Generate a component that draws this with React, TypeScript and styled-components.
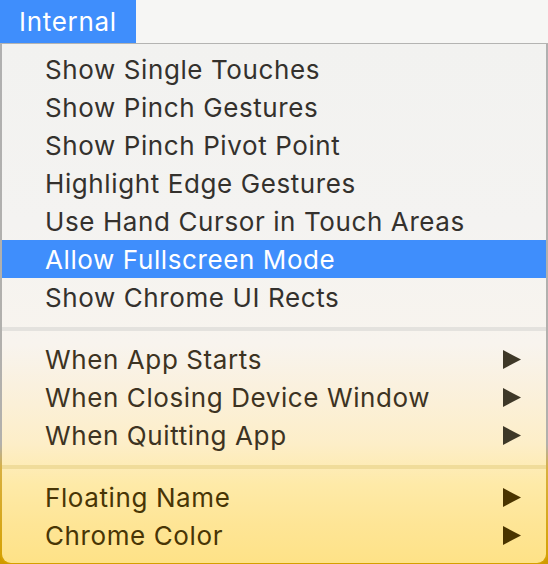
import React from "react";
import styled, { createGlobalStyle } from "styled-components";

const Global = createGlobalStyle`
  html, body { margin: 0; padding: 0; }
  body {
    width: 548px;
    height: 564px;
    overflow: hidden;
    background: linear-gradient(180deg, #f5f5f3 0px, #f5f5f3 450px, #d9a406 460px, #cf9a00 100%);
    font-family: Inter, "Liberation Sans", Arial, sans-serif;
  }
`;

const MenuBar = styled.div`
  height: 43px;
  background: #f6f6f4;
  border-bottom: 1px solid #b4b4b2;
  display: flex;
  align-items: stretch;
`;

const MenuTitle = styled.div`
  background: #3f8efc;
  color: #ffffff;
  font-size: 26px;
  letter-spacing: 0.7px;
  padding: 0 19px 0 19px;
  display: flex;
  align-items: center;
`;

const Frame = styled.div`
  padding: 0 2px 1px;
  border-radius: 0 0 10px 10px;
  background: linear-gradient(180deg, #b0b0b0 0px, #b2b0ac 400px, #d8b040 425px, #d5a000 100%);
`;

const Panel = styled.div`
  height: 510px;
  padding: 6px 0 3px;
  border-radius: 0 0 9px 9px;
  background: linear-gradient(
    180deg,
    #f2f2f0 0px,
    #f4f3f1 180px,
    #f8f4ee 300px,
    #faf1df 340px,
    #fdeec8 400px,
    #feeaa8 440px,
    #fee596 480px,
    #fee287 100%
  );
  display: flex;
  flex-direction: column;
`;

const Item = styled.div<{ $active?: boolean; $tone: string }>`
  height: 38px;
  display: flex;
  align-items: center;
  justify-content: space-between;
  padding: 0 25px 0 43px;
  font-size: 26px;
  letter-spacing: 0.6px;
  color: ${(p) => (p.$active ? "#ffffff" : p.$tone)};
  background: ${(p) => (p.$active ? "#3f8efc" : "transparent")};
`;

const Separator = styled.div<{ $color: string }>`
  height: 4px;
  margin: 11px 0 9px;
  background: ${(p) => p.$color};
`;

const Arrow = ({ color }: { color: string }) => (
  <svg width="18" height="19" viewBox="0 0 18 19" aria-hidden>
    <path d="M0 0 L18 9.5 L0 19 Z" fill={color} />
  </svg>
);

type Row = { label: string; sub?: boolean; active?: boolean };

const groups: { rows: Row[]; tone: string; arrow: string }[] = [
  {
    tone: "#34312d",
    arrow: "#34312d",
    rows: [
      { label: "Show Single Touches" },
      { label: "Show Pinch Gestures" },
      { label: "Show Pinch Pivot Point" },
      { label: "Highlight Edge Gestures" },
      { label: "Use Hand Cursor in Touch Areas" },
      { label: "Allow Fullscreen Mode", active: true },
      { label: "Show Chrome UI Rects" },
    ],
  },
  {
    tone: "#3d3322",
    arrow: "#3e3828",
    rows: [
      { label: "When App Starts", sub: true },
      { label: "When Closing Device Window", sub: true },
      { label: "When Quitting App", sub: true },
    ],
  },
  {
    tone: "#483505",
    arrow: "#4a3400",
    rows: [
      { label: "Floating Name", sub: true },
      { label: "Chrome Color", sub: true },
    ],
  },
];

const sepColors = ["#e4e2de", "#f0dc9a"];

export default function App() {
  return (
    <>
      <Global />
      <MenuBar>
        <MenuTitle>Internal</MenuTitle>
      </MenuBar>
      <Frame>
        <Panel>
          {groups.map((g, gi) => (
            <React.Fragment key={gi}>
              {gi > 0 && <Separator $color={sepColors[gi - 1]} />}
              {g.rows.map((r) => (
                <Item key={r.label} $active={r.active} $tone={g.tone}>
                  <span>{r.label}</span>
                  {r.sub && <Arrow color={g.arrow} />}
                </Item>
              ))}
            </React.Fragment>
          ))}
        </Panel>
      </Frame>
    </>
  );
}
